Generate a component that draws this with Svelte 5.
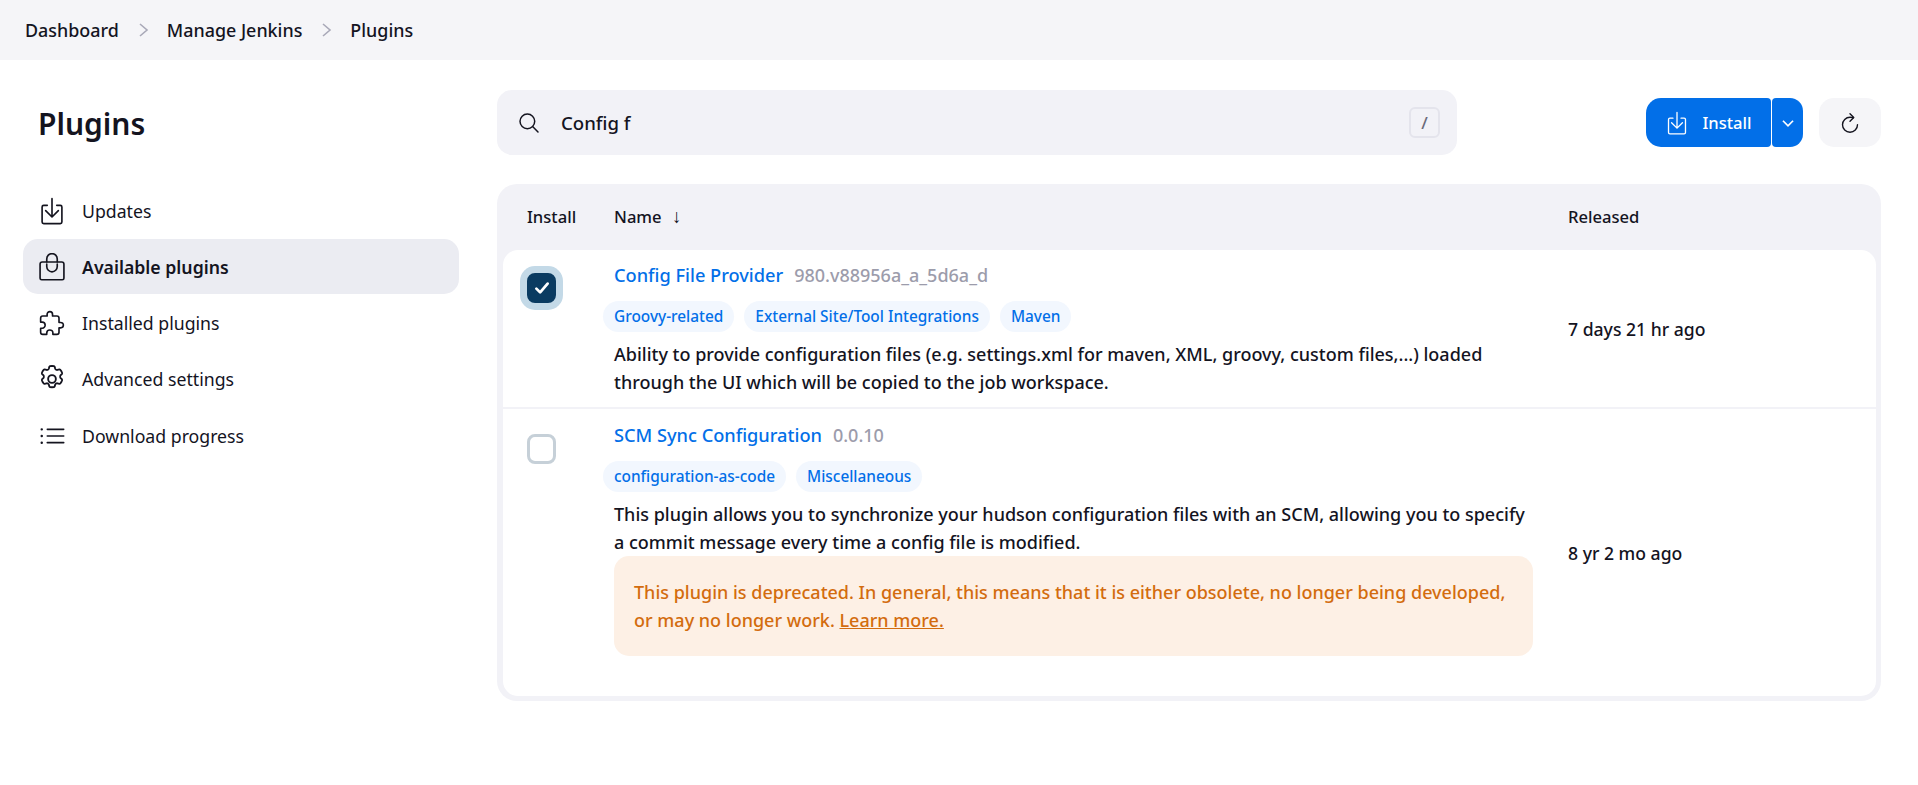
<script>
  const menu = [
    { label: "Updates", icon: "updates" },
    { label: "Available plugins", icon: "bag", active: true },
    { label: "Installed plugins", icon: "puzzle" },
    { label: "Advanced settings", icon: "gear" },
    { label: "Download progress", icon: "list" },
  ];
</script>

{#snippet download()}
  <path d="M170 152H105a30 30 0 0 0-30 30v276a30 30 0 0 0 30 30h302a30 30 0 0 0 30-30V182a30 30 0 0 0-30-30h-65" />
  <path d="M140 250l116 116 116-116M256 30v336" />
{/snippet}

<header class="bar">
  <a href="#d">Dashboard</a>
  <svg class="sep" viewBox="0 0 12 16"><path d="M3 2l7 6-7 6" /></svg>
  <a href="#m">Manage Jenkins</a>
  <svg class="sep" viewBox="0 0 12 16"><path d="M3 2l7 6-7 6" /></svg>
  <a href="#p">Plugins</a>
</header>

<div class="page">
  <aside class="side">
    <h1>Plugins</h1>
    <nav>
      {#each menu as item}
        <a href="#x" class="item" class:active={item.active}>
          <svg class="ico" viewBox="0 0 512 512">
            {#if item.icon === "updates"}
              {@render download()}
            {:else if item.icon === "bag"}
              <path d="M78 164h356a40 40 0 0 1 40 40v256a30 30 0 0 1-30 30H68a30 30 0 0 1-30-30V204a40 40 0 0 1 40-40z" />
              <path d="M160 164v-56a96 96 0 0 1 192 0v56M160 204v44a96 96 0 0 0 192 0v-44" />
            {:else if item.icon === "puzzle"}
              <path d="M413.66 246.1H386a2 2 0 01-2-2v-77.24A38.86 38.86 0 00345.14 128H267.9a2 2 0 01-2-2V98.34c0-27.14-21.5-49.86-48.64-50.33a49.53 49.53 0 00-50.4 49.51V126a2 2 0 01-2 2H87.62A39.74 39.74 0 0048 167.62V238a2 2 0 002 2h26.91c29.37 0 53.68 25.48 54.09 54.85.42 29.87-23.51 57.15-53.29 57.15H50a2 2 0 00-2 2v70.38A39.74 39.74 0 0087.62 464H158a2 2 0 002-2v-20.93c0-30.28 24.75-56.35 55-57.06 30.1-.7 57 20.31 57 50.28V462a2 2 0 002 2h71.14A38.86 38.86 0 00384 425.14v-78a2 2 0 012-2h28.48c27.6 0 49.52-22.67 49.52-50.4s-23.2-48.64-50.34-48.64z" />
            {:else if item.icon === "gear"}
              <g transform="translate(256 256) scale(1.14) translate(-256 -256)">
                <circle cx="256" cy="256" r="62" />
                <path d="M214 58c6-14 78-14 84 0l10 34c3 9 24 21 33 19l35-9c15-3 51 59 41 71l-25 26c-6 7-6 31 0 38l25 26c10 12-26 74-41 71l-35-9c-9-2-30 10-33 19l-10 34c-6 14-78 14-84 0l-10-34c-3-9-24-21-33-19l-35 9c-15 3-51-59-41-71l25-26c6-7 6-31 0-38l-25-26c-10-12 26-74 41-71l35 9c9 2 30-10 33-19z" />
              </g>
            {:else}
              <path d="M170 134h300M170 256h300M170 378h300" />
              <path class="dots" d="M68 134h1M68 256h1M68 378h1" />
            {/if}
          </svg>
          <span>{item.label}</span>
        </a>
      {/each}
    </nav>
  </aside>

  <main>
    <div class="toolbar">
      <div class="search">
        <svg class="glass" viewBox="0 0 512 512">
          <path d="M221 64a157 157 0 1 0 0 314 157 157 0 0 0 0-314z" />
          <path d="M338 338l110 110" />
        </svg>
        <span class="query">Config f</span>
        <kbd>/</kbd>
      </div>
      <div class="split">
        <button class="install">
          <svg viewBox="0 0 512 512">{@render download()}</svg>
          Install
        </button>
        <button class="caret" aria-label="More">
          <svg viewBox="0 0 16 16"><path d="M3.500 6l4.500 4.500L12.500 6" /></svg>
        </button>
      </div>
      <button class="refresh" aria-label="Refresh">
        <svg viewBox="0 0 512 512">
          <path d="M320 146s24.360-12-64-12a160 160 0 1 0 160 160" />
          <path d="M256 58l80 80-80 80" />
        </svg>
      </button>
    </div>

    <section class="table">
      <div class="head">
        <div class="c-install">Install</div>
        <div class="c-name">Name <span class="arrow">↓</span></div>
        <div class="c-rel">Released</div>
      </div>

      <div class="row first">
        <div class="c-install">
          <span class="check on">
            <svg viewBox="0 0 16 16"><path d="M3.500 8.500l3 3 6-7" /></svg>
          </span>
        </div>
        <div class="c-name">
          <div class="title"><a href="#c">Config File Provider</a><span class="ver">980.v88956a_a_5d6a_d</span></div>
          <div class="tags">
            <a href="#t">Groovy-related</a>
            <a href="#t">External Site/Tool Integrations</a>
            <a href="#t">Maven</a>
          </div>
          <p>Ability to provide configuration files (e.g. settings.xml for maven, XML, groovy, custom files,...) loaded through the UI which will be copied to the job workspace.</p>
        </div>
        <div class="c-rel">7 days 21 hr ago</div>
      </div>

      <div class="row second">
        <div class="c-install"><span class="check"></span></div>
        <div class="c-name">
          <div class="title"><a href="#s">SCM Sync Configuration</a><span class="ver">0.0.10</span></div>
          <div class="tags">
            <a href="#t">configuration-as-code</a>
            <a href="#t">Miscellaneous</a>
          </div>
          <p>This plugin allows you to synchronize your hudson configuration files with an SCM, allowing you to specify a commit message every time a config file is modified.</p>
          <div class="warn">This plugin is deprecated. In general, this means that it is either obsolete, no longer being developed, or may no longer work. <a href="#l">Learn more.</a></div>
        </div>
        <div class="c-rel">8 yr 2 mo ago</div>
      </div>
    </section>
  </main>
</div>

<style>
  :global(body) {
    background: #fff;
    color: #14141f;
    font-family: "Noto Sans", "Liberation Sans", sans-serif;
    font-size: 16px;
  }
  a {
    color: inherit;
    text-decoration: none;
  }

  .bar {
    height: 60px;
    box-sizing: border-box;
    padding: 0 0 1px 25px;
    background: #f5f5f8;
    display: flex;
    align-items: center;
    font-weight: 500;
    font-size: 17.9px;
  }
  .sep {
    width: 12px;
    height: 16px;
    margin: 0 18px;
    fill: none;
    stroke: #a9a9b8;
    stroke-width: 1.6;
  }

  .page {
    display: flex;
    padding: 30px 37px 0 23px;
  }
  .side {
    width: 436px;
    margin-right: 38px;
    flex-shrink: 0;
  }
  h1 {
    margin: 13px 0 38px 15px;
    font-size: 30px;
    line-height: 42px;
    font-weight: 600;
  }
  nav {
    display: flex;
    flex-direction: column;
    gap: 1.3px;
  }
  .item {
    height: 55px;
    border-radius: 15px;
    display: flex;
    align-items: center;
    gap: 16px;
    padding-left: 15px;
    font-size: 17.7px;
    font-weight: 400;
  }
  .item.active {
    background: #ebecf2;
    font-weight: 600;
  }
  .ico {
    width: 28px;
    height: 28px;
    fill: none;
    stroke: #14141f;
    stroke-width: 30;
    stroke-linecap: round;
    stroke-linejoin: round;
    flex-shrink: 0;
  }
  .dots {
    stroke-width: 44;
  }

  main {
    flex: 1;
    min-width: 0;
  }
  .toolbar {
    display: flex;
    align-items: center;
    height: 65px;
    margin-bottom: 29px;
  }
  .search {
    width: 960px;
    height: 65px;
    margin-right: auto;
    border-radius: 15px;
    background: #f2f2f7;
    display: flex;
    align-items: center;
    padding: 0 17px 0 20px;
    box-sizing: border-box;
    font-weight: 500;
    font-size: 18.6px;
  }
  .glass {
    width: 24px;
    height: 24px;
    fill: none;
    stroke: #14141f;
    stroke-width: 32;
    stroke-linecap: round;
  }
  .query {
    margin-left: 20px;
    flex: 1;
  }
  kbd {
    width: 31px;
    height: 31px;
    box-sizing: border-box;
    border: 2px solid #e4e4ec;
    border-radius: 6px;
    display: flex;
    align-items: center;
    justify-content: center;
    font-family: inherit;
    font-size: 17px;
    color: #6a6a7a;
  }
  button {
    border: none;
    font-family: inherit;
    font-size: 16.6px;
    padding: 0;
    display: flex;
    align-items: center;
    justify-content: center;
  }
  .split {
    display: flex;
    gap: 1px;
    height: 49px;
    margin-right: 16px;
  }
  .install,
  .caret {
    background: #026fe8;
    color: #fff;
    font-weight: 500;
  }
  .install {
    width: 125px;
    gap: 13px;
    border-radius: 15px 4px 4px 15px;
  }
  .install svg {
    width: 24px;
    height: 24px;
    fill: none;
    stroke: #fff;
    stroke-width: 28;
    stroke-linecap: round;
    stroke-linejoin: round;
  }
  .caret {
    width: 31px;
    border-radius: 4px 13px 13px 4px;
  }
  .caret svg {
    width: 18px;
    height: 18px;
    fill: none;
    stroke: #fff;
    stroke-width: 1.5;
  }
  .refresh {
    width: 62px;
    height: 49px;
    border-radius: 15px;
    background: #f5f5f8;
  }
  .refresh svg {
    width: 24px;
    height: 24px;
    fill: none;
    stroke: #14141f;
    stroke-width: 30;
    stroke-linecap: round;
    stroke-linejoin: round;
  }

  .table {
    background: #f2f2f7;
    border-radius: 20px;
    padding: 0 5px 5px 6px;
    display: flex;
    flex-direction: column;
    gap: 2px;
  }
  .head,
  .row {
    display: grid;
    grid-template-columns: 111px 1fr 308px;
  }
  .head {
    height: 64px;
    align-items: center;
    font-weight: 500;
    font-size: 16.6px;
  }
  .head .c-install {
    padding-left: 24px;
  }
  .arrow {
    margin-left: 6px;
    font-size: 19px;
  }
  .row {
    background: #fff;
    align-items: center;
    font-size: 17.6px;
  }
  .first {
    height: 157px;
    border-radius: 15px 15px 0 0;
  }
  .second {
    height: 287px;
    border-radius: 0 0 15px 15px;
  }
  .row .c-install {
    align-self: start;
    padding-left: 24px;
  }
  .first .c-install {
    padding-top: 23px;
  }
  .second .c-install {
    padding-top: 25px;
  }
  .check {
    display: flex;
    align-items: center;
    justify-content: center;
    width: 29px;
    height: 30px;
    box-sizing: border-box;
    border: 3px solid #c6d0d8;
    border-radius: 8px;
  }
  .check.on {
    background: #0a3b61;
    border-color: #0a3b61;
    box-shadow: 0 0 0 7px #c3d9e7;
  }
  .check svg {
    width: 20px;
    height: 20px;
    fill: none;
    stroke: #fff;
    stroke-width: 2.2;
    stroke-linecap: round;
    stroke-linejoin: round;
  }
  .c-name {
    min-width: 0;
  }
  .row .c-name {
    align-self: start;
    padding-top: 13px;
    padding-right: 35px;
  }
  .second .c-name {
    padding-top: 14px;
  }
  .title {
    display: flex;
    align-items: center;
    gap: 11px;
    font-weight: 500;
    font-size: 18.2px;
    line-height: 24px;
  }
  .title a {
    color: #026fe8;
  }
  .ver {
    color: #9c9cab;
    font-size: 18px;
  }
  .tags {
    display: flex;
    gap: 10px;
    margin: 14px 0 8px -11px;
  }
  .tags a {
    height: 31px;
    line-height: 31px;
    padding: 0 11px;
    border-radius: 16px;
    background: #f2f7fe;
    color: #026fe8;
    font-size: 15.4px;
    font-weight: 500;
  }
  p {
    margin: 0;
    line-height: 28px;
    font-weight: 500;
    font-size: 18px;
  }
  .warn {
    margin-top: 0;
    padding: 22px 20px;
    border-radius: 15px;
    background: #fdf0e5;
    color: #d36c0e;
    line-height: 28px;
    font-weight: 500;
    font-size: 18px;
  }
  .warn a {
    text-decoration: underline;
  }
  .c-rel {
    padding-left: 0;
    font-weight: 500;
  }
</style>
